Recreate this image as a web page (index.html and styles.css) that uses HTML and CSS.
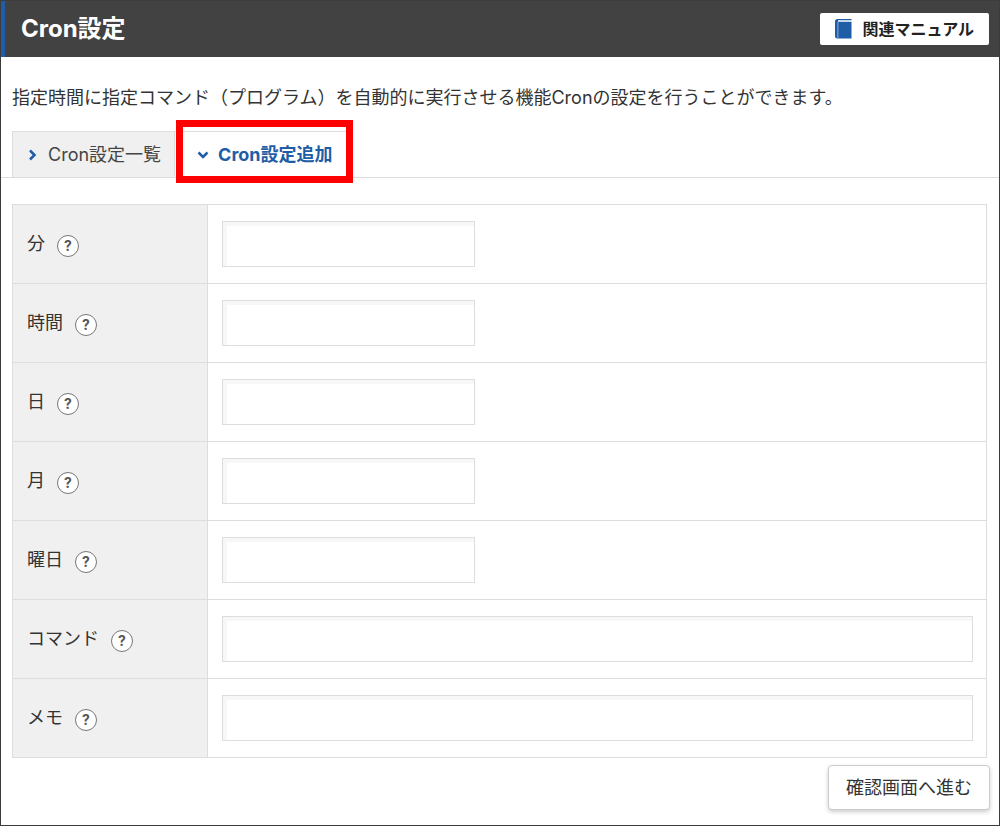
FILE: index.html
```
<!DOCTYPE html>
<html lang="ja">
<head>
<meta charset="utf-8">
<meta name="viewport" content="width=device-width, initial-scale=1">
<title>Cron設定</title>
<link rel="stylesheet" href="styles.css">
</head>
<body>
<div class="page">
  <header class="header">
    <h1 class="title">Cron設定</h1>
    <a class="manual" href="#">
      <svg class="book" width="17" height="20" viewBox="0 0 17 20" aria-hidden="true"><path d="M2.500 0H16.500V1.200H3V2.800H16.500V19.500H2.500Q0 19.500 0 17V2.500Q0 0 2.500 0Z" fill="#1f5da6"/><path d="M2.900 3V19.500" stroke="#a9c3e0" stroke-width="0.800"/></svg>
      関連マニュアル
    </a>
  </header>
  <main class="content">
    <p class="lead">指定時間に指定コマンド（プログラム）を自動的に実行させる機能Cronの設定を行うことができます。</p>
    <nav class="tabs">
      <a class="tab" href="#list"><svg class="chevron" width="10" height="12" viewBox="0 0 10 12" aria-hidden="true"><path d="M2 1.500L6.500 6L2 10.500" /></svg>Cron設定一覧</a>
      <a class="tab tab-active" href="#add" aria-current="page"><svg class="chevron" width="12" height="10" viewBox="0 0 12 10" aria-hidden="true"><path d="M1.500 2.500L6 7L10.500 2.500" /></svg>Cron設定追加</a>
    </nav>
    <form class="form">
      <div class="fields">
        <div class="row">
          <div class="name"><label for="minute">分</label><button class="help" type="button" aria-label="分のヘルプ">?</button></div>
          <div class="value"><input class="input short" id="minute" type="text"></div>
        </div>
        <div class="row">
          <div class="name"><label for="hour">時間</label><button class="help" type="button" aria-label="時間のヘルプ">?</button></div>
          <div class="value"><input class="input short" id="hour" type="text"></div>
        </div>
        <div class="row">
          <div class="name"><label for="day">日</label><button class="help" type="button" aria-label="日のヘルプ">?</button></div>
          <div class="value"><input class="input short" id="day" type="text"></div>
        </div>
        <div class="row">
          <div class="name"><label for="month">月</label><button class="help" type="button" aria-label="月のヘルプ">?</button></div>
          <div class="value"><input class="input short" id="month" type="text"></div>
        </div>
        <div class="row">
          <div class="name"><label for="weekday">曜日</label><button class="help" type="button" aria-label="曜日のヘルプ">?</button></div>
          <div class="value"><input class="input short" id="weekday" type="text"></div>
        </div>
        <div class="row">
          <div class="name"><label for="command">コマンド</label><button class="help" type="button" aria-label="コマンドのヘルプ">?</button></div>
          <div class="value"><input class="input" id="command" type="text"></div>
        </div>
        <div class="row">
          <div class="name"><label for="memo">メモ</label><button class="help" type="button" aria-label="メモのヘルプ">?</button></div>
          <div class="value"><input class="input" id="memo" type="text"></div>
        </div>
      </div>
      <div class="actions"><button class="submit" type="submit">確認画面へ進む</button></div>
    </form>
  </main>
</div>
</body>
</html>
```
FILE: styles.css
```
* { box-sizing: border-box; }

body {
  margin: 0;
  background: #fff;
  color: #333;
  font-family: Inter, "Noto Sans CJK JP", sans-serif;
  font-size: 18px;
  line-height: 26px;
}

button, input { font: inherit; color: inherit; }

.page {
  min-height: 100vh;
  border: 1px solid #3c3c3c;
}

.header {
  display: flex;
  align-items: center;
  justify-content: space-between;
  height: 56px;
  padding: 0 10px 0 16px;
  border-left: 4px solid #1f5da6;
  background: #424242;
}

.title {
  margin: 0;
  color: #fff;
  font-size: 24px;
  font-weight: 700;
  line-height: 32px;
}

.manual {
  display: flex;
  align-items: center;
  gap: 10px;
  height: 32px;
  padding: 0 15px;
  border-radius: 2px;
  background: #fff;
  color: #222;
  font-size: 16px;
  font-weight: 700;
  text-decoration: none;
}

.lead {
  margin: 0;
  padding: 28px 11px 20px;
}

.tabs {
  display: flex;
  padding-left: 11px;
  border-bottom: 1px solid #ddd;
}

.tab {
  display: flex;
  align-items: center;
  gap: 10px;
  height: 46px;
  padding: 0 13px 0 15px;
  border: 1px solid #ddd;
  border-bottom: 0;
  background: #f0f0f0;
  color: #444;
  text-decoration: none;
}

.tab-active {
  position: relative;
  padding: 0 19px 0 22px;
  border-left: 0;
  background: #fff;
  color: #1f5da6;
  font-weight: 700;
  gap: 9px;
}

/* Highlight frame around the selected tab */
.tab-active::after {
  content: "";
  position: absolute;
  inset: -12px -1px -6px 1px;
  border: 7px solid #f00;
}

.chevron {
  flex: none;
  fill: none;
  stroke: #1f5da6;
  stroke-width: 2.5;
}

.form { padding: 26px 12px 14px 11px; }

.fields {
  border: 1px solid #ddd;
  border-bottom: 0;
}

.row {
  display: grid;
  grid-template-columns: 195px 1fr;
  border-bottom: 1px solid #ddd;
}

.name {
  display: flex;
  align-items: center;
  gap: 12px;
  padding: 0 14px;
  border-right: 1px solid #ddd;
  background: #f0f0f0;
}

.help {
  width: 22px;
  height: 22px;
  margin-top: 4px;
  padding: 0;
  border: 1px solid #777;
  border-radius: 50%;
  background: #fff;
  color: #555;
  font-size: 14px;
  font-weight: 700;
  line-height: 18px;
}

.value { padding: 16px 13px 16px 14px; }

.input {
  display: block;
  width: 100%;
  height: 46px;
  padding: 0 12px;
  border: 1px solid #ddd;
  border-radius: 0;
  background: #fff;
  box-shadow: inset 4px 4px 0 #f7f7f7;
}

.short { max-width: 253px; }

.actions {
  display: flex;
  justify-content: flex-end;
  margin: 7px -3px 0 0;
}

.submit {
  height: 45px;
  padding: 0 17px;
  border: 1px solid #ccc;
  border-radius: 4px;
  background: #fff;
  box-shadow: 0 2px 4px rgba(0, 0, 0, 0.2);
}
```
